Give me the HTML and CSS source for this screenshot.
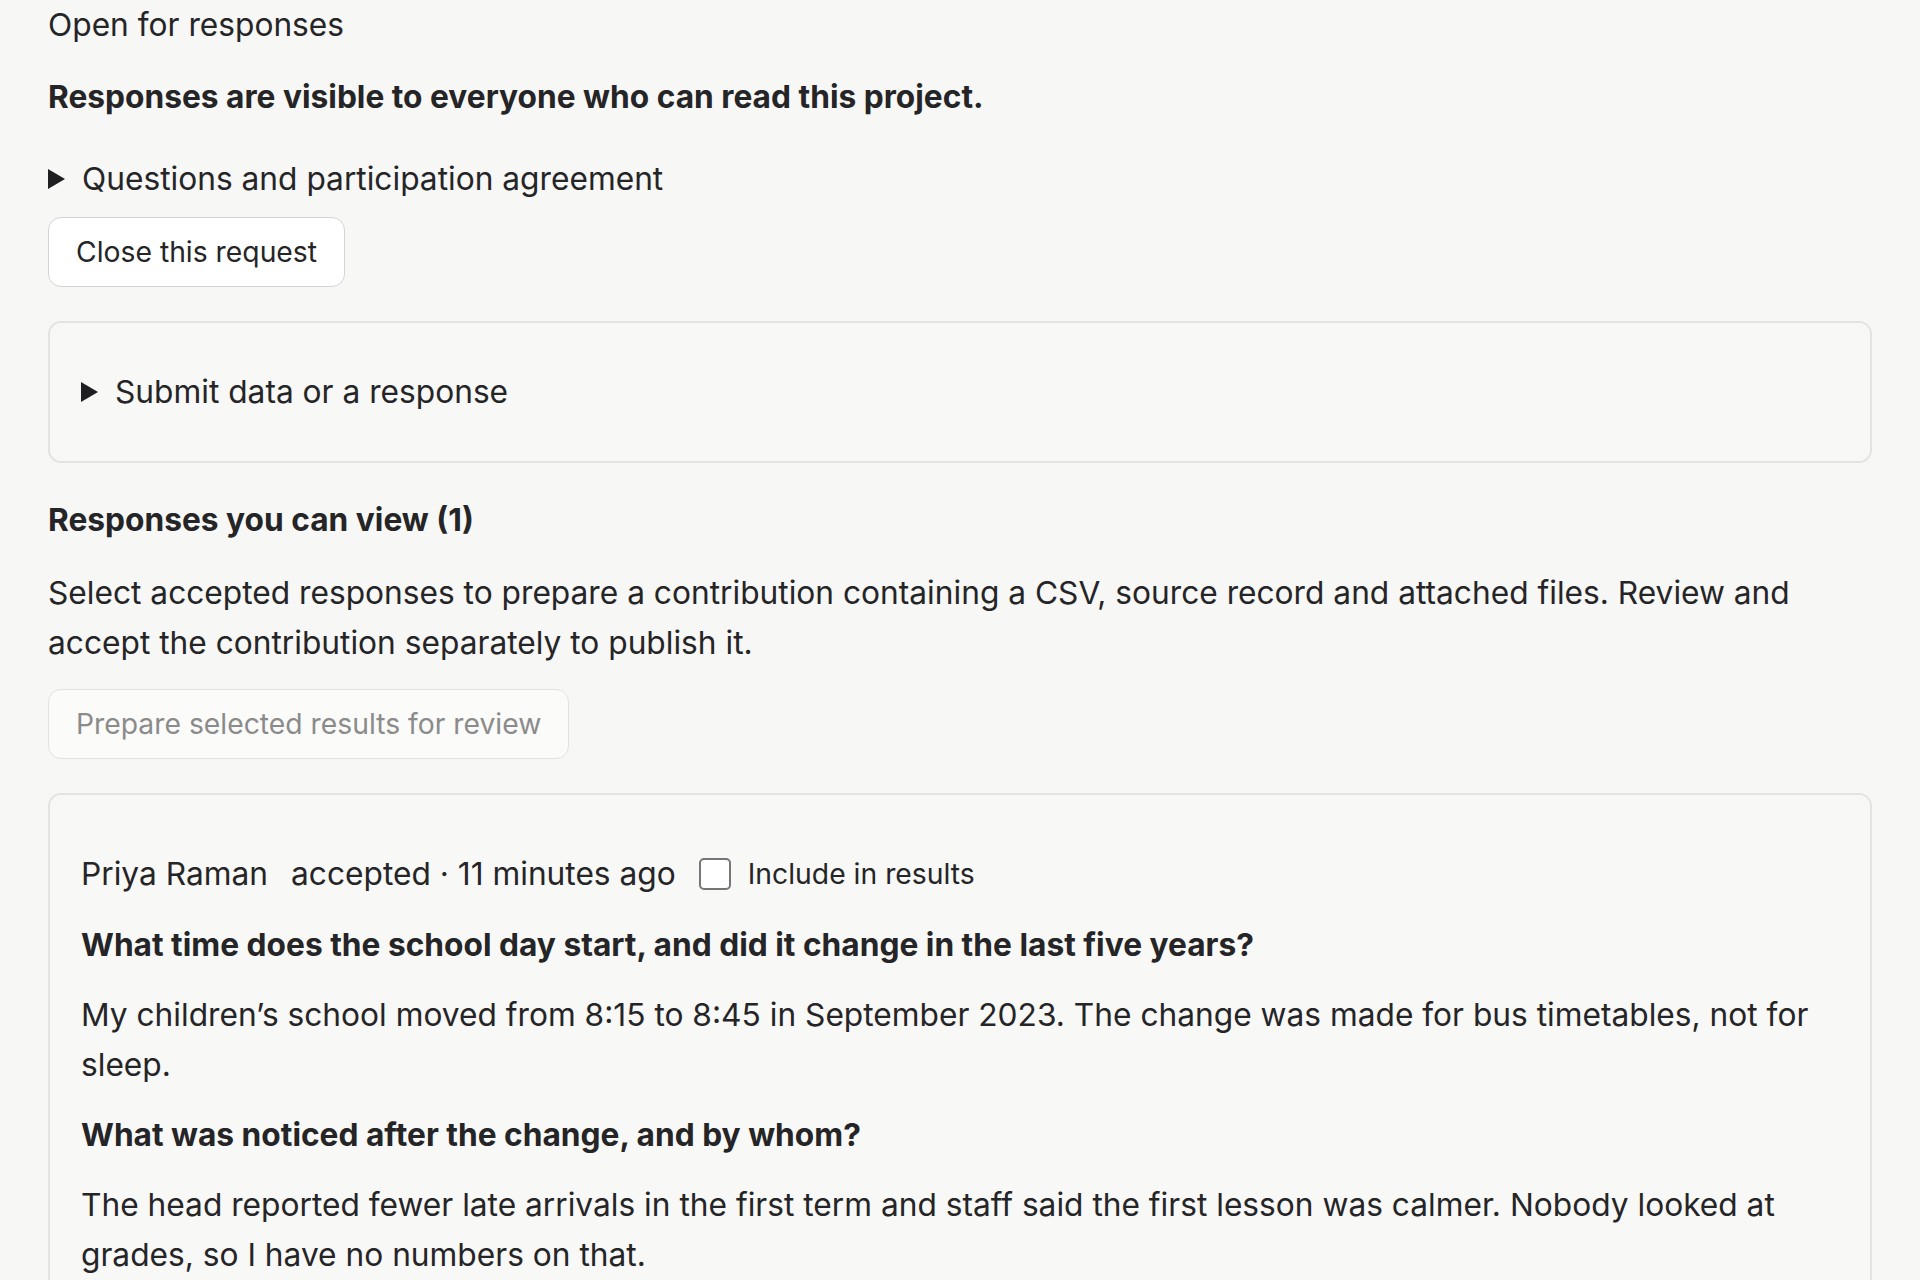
FILE: index.html
```html
<!DOCTYPE html>
<html lang="en">
<head>
<meta charset="utf-8">
<title>Open for responses</title>
<link rel="stylesheet" href="styles.css">
</head>
<body>
<main class="page">
  <p class="status">Open for responses</p>
  <p class="visibility">Responses are visible to everyone who can read this project.</p>
  <details class="disclosure questions">
    <summary>Questions and participation agreement</summary>
  </details>
  <button class="btn" type="button">Close this request</button>

  <section class="box submit-box">
    <details class="disclosure">
      <summary>Submit data or a response</summary>
    </details>
  </section>

  <h2 class="section-title">Responses you can view (1)</h2>
  <p class="intro">Select accepted responses to prepare a contribution containing a CSV, source record and attached files. Review and accept the contribution separately to publish it.</p>
  <button class="btn btn-disabled" type="button" disabled>Prepare selected results for review</button>

  <article class="box response">
    <div class="meta">
      <span class="author">Priya Raman</span>
      <span class="when">accepted · 11 minutes ago</span>
      <label class="include"><input type="checkbox" class="check"><span>Include in results</span></label>
    </div>
    <h3 class="question">What time does the school day start, and did it change in the last five years?</h3>
    <p class="answer">My children’s school moved from 8:15 to 8:45 in September 2023. The change was made for bus timetables, not for sleep.</p>
    <h3 class="question">What was noticed after the change, and by whom?</h3>
    <p class="answer">The head reported fewer late arrivals in the first term and staff said the first lesson was calmer. Nobody looked at grades, so I have no numbers on that.</p>
  </article>
</main>
</body>
</html>
```

FILE: styles.css
```css
* { box-sizing: border-box; }

html, body {
  margin: 0;
  padding: 0;
  background: #f7f7f5;
}

body {
  font-family: Inter, "Noto Sans", "Liberation Sans", sans-serif;
  font-size: 31.7px;
  line-height: 50px;
  color: #252528;
}

.page {
  padding: 0 48px;
}

p, h2, h3 { margin: 0; }

.status { margin: 0; }

.visibility {
  margin-top: 22px;
  font-weight: 700;
}

.disclosure summary {
  list-style: none;
  cursor: pointer;
  display: flex;
  align-items: center;
}

.disclosure summary::-webkit-details-marker { display: none; }

.disclosure summary::before {
  content: "";
  width: 17px;
  height: 20px;
  margin-right: 17px;
  background: #1f1f22;
  clip-path: polygon(0 0, 100% 50%, 0 100%);
  flex: none;
}

.questions { margin-top: 32px; }

.btn {
  display: block;
  margin-top: 13px;
  font-family: inherit;
  font-size: 28.3px;
  line-height: 40px;
  padding: 14px 27px;
  color: #252528;
  background: #ffffff;
  border: 1px solid #d4d4d2;
  border-radius: 13px;
}

.box {
  border: 2px solid #e3e3e1;
  border-radius: 13px;
  background: #f8f8f6;
}

.submit-box {
  margin-top: 34px;
  padding: 44px 31px;
}

.section-title {
  margin-top: 32px;
  font-size: 31.7px;
  font-weight: 700;
}

.intro { margin-top: 23px; }

.btn-disabled {
  margin-top: 21px;
  color: #8b8b8b;
  background: #fbfbfa;
  border-color: #e2e2e0;
}

.response {
  margin-top: 34px;
  padding: 44px 31px 60px;
}

.meta {
  margin-top: 10px;
  display: flex;
  align-items: center;
  gap: 23px;
}

.include {
  display: flex;
  align-items: center;
  gap: 17px;
  font-size: 28.3px;
}

.check {
  appearance: none;
  -webkit-appearance: none;
  margin: 0;
  width: 32px;
  height: 32px;
  border: 2px solid #767676;
  border-radius: 5px;
  background: #ffffff;
}

.question {
  margin-top: 21px;
  font-size: 31.7px;
  font-weight: 700;
}

.answer { margin-top: 20px; }
.question + .answer { margin-top: 20px; }
.answer + .question { margin-top: 20px; }
```
